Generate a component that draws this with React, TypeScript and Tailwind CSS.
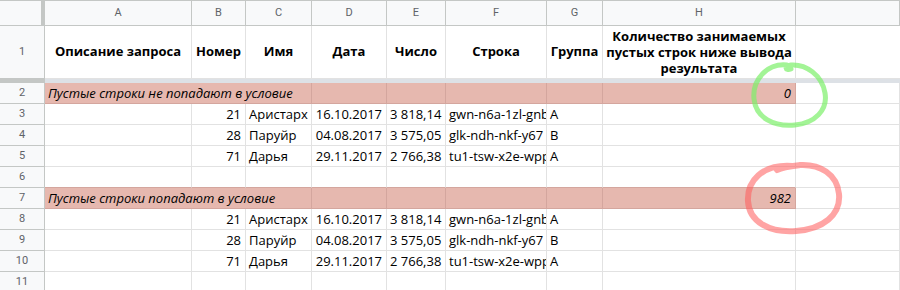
const cols = ["A", "B", "C", "D", "E", "F", "G", "H", ""];

const rows = [
    { n: 21, name: "Аристарх", date: "16.10.2017", num: "3 818,14", str: "gwn-n6a-1zl-gnbq", group: "A" },
    { n: 28, name: "Паруйр", date: "04.08.2017", num: "3 575,05", str: "glk-ndh-nkf-y67", group: "B" },
    { n: 71, name: "Дарья", date: "29.11.2017", num: "2 766,38", str: "tu1-tsw-x2e-wppz", group: "A" },
];

const RowNum = ({ n, tall }: { n: number; tall?: boolean }) => (
    <div
        className={
            "flex items-center justify-center border-r border-b border-[#c4c7c5] bg-[#f8f9fa] text-[11px] text-[#5f6368] font-['Roboto',sans-serif] " +
            (tall ? "h-[53px]" : "h-[21px]")
        }
    >
        {n}
    </div>
);

const Cell = ({
    children,
    right,
    bottom,
}: {
    children?: React.ReactNode;
    right?: boolean;
    bottom?: string;
}) => (
    <div
        className={
            "h-[21px] border-r border-b border-r-[#e2e2e2] px-[3px] pr-[4px] leading-[20px] overflow-hidden whitespace-nowrap " +
            (right ? "text-right " : "text-left ") +
            (bottom ?? "border-b-[#e2e2e2]")
        }
    >
        {children}
    </div>
);

const PinkRow = ({ num, text, value }: { num: number; text: string; value: string }) => (
    <>
        <RowNum n={num} />
        <div className="col-span-3 h-[21px] border-r border-b border-[#d4a69e] bg-[#e6b8af] px-[3px] leading-[20px] italic whitespace-nowrap overflow-hidden">
            {text}
        </div>
        <div className="h-[21px] border-r border-b border-[#d4a69e] bg-[#e6b8af]" />
        <div className="h-[21px] border-r border-b border-[#d4a69e] bg-[#e6b8af]" />
        <div className="h-[21px] border-r border-b border-[#d4a69e] bg-[#e6b8af]" />
        <div className="h-[21px] border-r border-b border-[#d4a69e] bg-[#e6b8af]" />
        <div className="h-[21px] border-r border-b border-[#d4a69e] bg-[#e6b8af] pr-[4px] text-right leading-[20px] italic">
            {value}
        </div>
        <Cell />
    </>
);

const DataRows = ({ start }: { start: number }) => (
    <>
        {rows.map((r, i) => (
            <div key={i} className="contents">
                <RowNum n={start + i} />
                <Cell />
                <Cell right>{r.n}</Cell>
                <Cell>{r.name}</Cell>
                <Cell right>{r.date}</Cell>
                <Cell right>{r.num}</Cell>
                <Cell>{r.str}</Cell>
                <Cell>{r.group}</Cell>
                <Cell />
                <Cell />
            </div>
        ))}
    </>
);

const EmptyRow = ({ num, pinkBelow }: { num: number; pinkBelow?: boolean }) => (
    <>
        <RowNum n={num} />
        {[0, 1, 2, 3, 4, 5, 6, 7].map((k) => (
            <Cell key={k} bottom={pinkBelow ? "border-b-[#d4a69e]" : undefined} />
        ))}
        <Cell />
    </>
);

const Circles = () => (
    <svg className="absolute inset-0 pointer-events-none" width="900" height="290" viewBox="0 0 900 290">
        <path
            d="M 787 65 C 768 63, 752 79, 754 99 C 756 118, 774 127, 795 125 C 815 123, 828 110, 825 93 C 822 75, 806 64, 791 65 C 784 66, 785 71, 791 69"
            fill="none"
            stroke="#7cf06a"
            strokeOpacity="0.7"
            strokeWidth="5"
            strokeLinecap="round"
        />
        <path
            d="M 792 166 C 762 164, 747 181, 748 201 C 749 222, 770 233, 796 231 C 823 229, 841 215, 839 194 C 837 174, 820 164, 800 165 C 792 166, 783 167, 777 170"
            fill="none"
            stroke="#ff5a5a"
            strokeOpacity="0.55"
            strokeWidth="6"
            strokeLinecap="round"
        />
    </svg>
);

export default function App() {
    return (
        <div className="relative w-[900px] h-[290px] overflow-hidden bg-white">
            <div className="grid grid-cols-[45px_147px_54px_66px_75px_59px_101px_56px_193px_1fr] border-t border-[#c4c7c5] font-['Open_Sans',sans-serif] text-[13px] text-black">
                {/* column letters */}
                <div className="h-[25px] border-r-4 border-b border-[#c4c7c5] bg-[#f8f9fa]" />
                {cols.map((c, i) => (
                    <div
                        key={i}
                        className="h-[25px] flex items-center justify-center border-r border-b border-[#c4c7c5] bg-[#f8f9fa] text-[11px] text-[#5f6368] font-['Roboto',sans-serif]"
                    >
                        {c}
                    </div>
                ))}

                {/* header row */}
                <RowNum n={1} tall />
                {["Описание запроса", "Номер", "Имя", "Дата", "Число", "Строка", "Группа"].map((h) => (
                    <div
                        key={h}
                        className="h-[53px] flex items-center justify-center border-r border-b border-[#e2e2e2] font-bold whitespace-nowrap"
                    >
                        {h}
                    </div>
                ))}
                <div className="h-[53px] flex items-center justify-center border-r border-b border-[#e2e2e2] font-bold text-center leading-[16px]">
                    Количество занимаемых пустых строк ниже вывода результата
                </div>
                <div className="h-[53px] border-b border-[#e2e2e2]" />

                {/* freeze bar */}
                <div className="h-[4px] bg-[#c4c7c5]" />
                <div className="col-span-9 h-[4px] bg-[#dde1e6]" />

                <PinkRow num={2} text="Пустые строки не попадают в условие" value="0" />
                <DataRows start={3} />
                <EmptyRow num={6} pinkBelow />
                <PinkRow num={7} text="Пустые строки попадают в условие" value="982" />
                <DataRows start={8} />
                <EmptyRow num={11} />
            </div>
            <Circles />
        </div>
    );
}
